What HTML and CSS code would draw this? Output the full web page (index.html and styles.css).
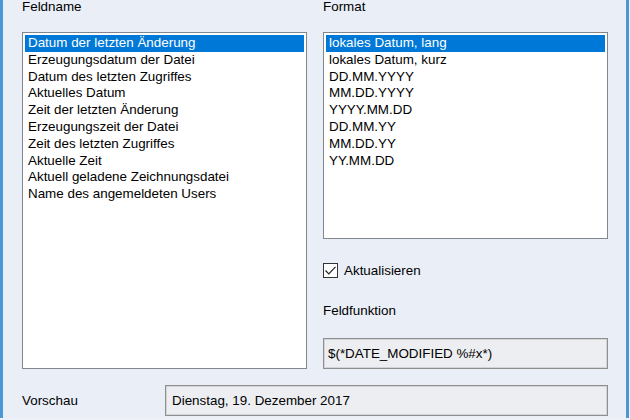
FILE: index.html
```html
<!DOCTYPE html>
<html lang="de">
<head>
    <meta charset="UTF-8">
    <title>Feld einfügen</title>
    <link rel="stylesheet" href="styles.css">
</head>
<body>
    <div class="dialog">
        <div class="columns">
            <div class="col">
                <div class="label">Feldname</div>
                <div class="listbox listbox-tall">
                    <div class="item selected">Datum der letzten Änderung</div>
                    <div class="item">Erzeugungsdatum der Datei</div>
                    <div class="item">Datum des letzten Zugriffes</div>
                    <div class="item">Aktuelles Datum</div>
                    <div class="item">Zeit der letzten Änderung</div>
                    <div class="item">Erzeugungszeit der Datei</div>
                    <div class="item">Zeit des letzten Zugriffes</div>
                    <div class="item">Aktuelle Zeit</div>
                    <div class="item">Aktuell geladene Zeichnungsdatei</div>
                    <div class="item">Name des angemeldeten Users</div>
                </div>
            </div>

            <div class="col">
                <div class="label">Format</div>
                <div class="listbox listbox-short">
                    <div class="item selected">lokales Datum, lang</div>
                    <div class="item">lokales Datum, kurz</div>
                    <div class="item">DD.MM.YYYY</div>
                    <div class="item">MM.DD.YYYY</div>
                    <div class="item">YYYY.MM.DD</div>
                    <div class="item">DD.MM.YY</div>
                    <div class="item">MM.DD.YY</div>
                    <div class="item">YY.MM.DD</div>
                </div>

                <label class="check-row">
                    <span class="checkbox">
                        <svg width="13" height="13" viewBox="0 0 13 13">
                            <path d="M1.5 6.5 L4.8 9.8 L11.5 2.8" fill="none" stroke="#222" stroke-width="1.2"/>
                        </svg>
                    </span>
                    Aktualisieren
                </label>

                <div class="label label-func">Feldfunktion</div>
                <div class="field">$(*DATE_MODIFIED %#x*)</div>
            </div>
        </div>

        <div class="preview-row">
            <div class="preview-label">Vorschau</div>
            <div class="field preview-field">Dienstag, 19. Dezember 2017</div>
        </div>
    </div>
</body>
</html>
```

FILE: styles.css
```css
* {
    margin: 0;
    padding: 0;
    box-sizing: border-box;
}

body {
    background: #eef2f8;
    font-family: 'Liberation Sans', Arial, sans-serif;
    font-size: 13.4px;
    color: #000;
    overflow: hidden;
}

.dialog {
    width: 629px;
    height: 420px;
    background: #eaeff7;
    border-left: 3px solid #4b97d6;
    border-right: 3px solid #4b97d6;
    padding: 0 18px 0 19px;
}

.columns {
    display: grid;
    grid-template-columns: 285px 285px;
    column-gap: 16px;
    margin-top: -2px;
}

.label {
    line-height: 17px;
    height: 17px;
}

.listbox {
    margin-top: 17px;
    background: #fff;
    border: 1px solid #82878f;
    padding: 2px;
}

.listbox-tall {
    height: 337px;
}

.listbox-short {
    height: 207px;
}

.item {
    line-height: 16.8px;
    height: 16.8px;
    padding-left: 3px;
    white-space: nowrap;
}

.item.selected {
    background: #0078d7;
    color: #fff;
}

.check-row {
    display: flex;
    align-items: center;
    gap: 6px;
    height: 17px;
    line-height: 17px;
    margin-top: 23px;
}

.checkbox {
    width: 15px;
    height: 15px;
    border: 1px solid #333;
    background: #fff;
    display: flex;
    align-items: center;
    justify-content: center;
}

.label-func {
    margin-top: 23px;
}

.field {
    margin-top: 19px;
    height: 31px;
    display: flex;
    align-items: center;
    padding-left: 4px;
    background: #eceef1;
    border: 1px solid #8f8f8f;
    box-shadow: inset 0 0 0 1px #d2d4d8;
    white-space: nowrap;
}

.preview-row {
    display: flex;
    align-items: center;
    margin-top: 16px;
}

.preview-label {
    width: 143px;
}

.preview-field {
    margin-top: 0;
    flex: 1;
    padding-left: 6px;
}
```
